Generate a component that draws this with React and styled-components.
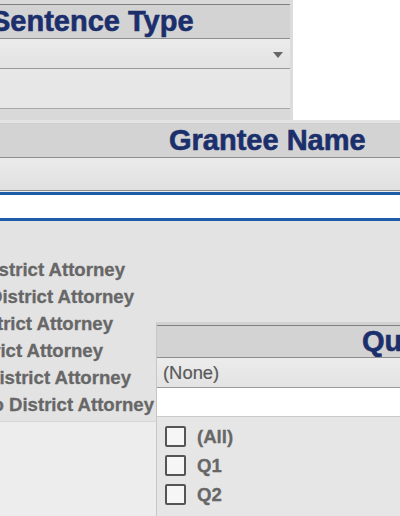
import React from "react";
import styled, { createGlobalStyle } from "styled-components";

const Global = createGlobalStyle`
  html, body { margin: 0; padding: 0; }
  body {
    width: 400px;
    height: 516px;
    overflow: hidden;
    background: #ededed;
    font-family: "Liberation Sans", Arial, sans-serif;
  }
`;

const Page = styled.div`
  position: relative;
  width: 400px;
  height: 516px;
  overflow: hidden;
  display: flex;
  flex-direction: column;
`;

const TopArea = styled.div`
  display: flex;
  height: 120px;
  flex-shrink: 0;
`;

const SentencePanel = styled.div`
  width: 293px;
  border-right: 3px solid #dcdcdc;
  background: #d9d9d9;
  display: flex;
  flex-direction: column;
  padding-top: 4px;
  box-sizing: border-box;
`;

const WhiteFill = styled.div`
  flex: 1;
  background: #ffffff;
`;

const Header = styled.div`
  height: ${(p) => p.$h || 33}px;
  flex-shrink: 0;
  background: #d3d3d3;
  border-top: ${(p) => (p.$topLine ? "1px solid #7f7f7f" : "none")};
  border-bottom: 1px solid #8e8e8e;
  display: flex;
  align-items: center;
  padding-left: ${(p) => p.$pad || 0}px;
  white-space: nowrap;
  overflow: hidden;
`;

const Title = styled.span`
  font-size: 29px;
  font-weight: 700;
  color: #1b2f6c;
  margin-left: ${(p) => p.$shift || 0}px;
  -webkit-text-stroke: 0.6px #1b2f6c;
`;

const DropRow = styled.div`
  height: 29px;
  flex-shrink: 0;
  background: linear-gradient(#ececec, #e2e2e2);
  border-bottom: 1px solid #9a9a9a;
  display: flex;
  align-items: center;
  justify-content: flex-end;
  padding-right: 7px;
`;

const Arrow = styled.div`
  width: 0;
  height: 0;
  border-left: 5px solid transparent;
  border-right: 5px solid transparent;
  border-top: 6px solid #666;
  margin-top: 2px;
`;

const EmptyRow = styled.div`
  height: 39px;
  flex-shrink: 0;
  background: #e7e7e7;
  border-bottom: 1px solid #a8a8a8;
`;

const Gap = styled.div`
  height: 3px;
  flex-shrink: 0;
  background: #e3e3e3;
  border-bottom: 1px solid #cfcfcf;
`;

const GranteePanel = styled.div`
  display: flex;
  flex-direction: column;
  flex-shrink: 0;
`;

const FilterRow = styled.div`
  height: 32px;
  flex-shrink: 0;
  background: linear-gradient(#ebebeb, #e0e0e0);
  border-bottom: 1px solid #8c8c8c;
`;

const SearchBox = styled.div`
  margin-top: 1px;
  height: 23px;
  background: #ffffff;
  border-top: 3px solid #1c5ca9;
  border-bottom: 3px solid #1c5ca9;
`;

const List = styled.div`
  height: 201px;
  flex-shrink: 0;
  background: #e3e3e3;
  padding-top: 35px;
  box-sizing: border-box;
  display: flex;
  flex-direction: column;
  border-bottom: 1px solid #d6d6d6;
`;

const ListItem = styled.div`
  height: 27px;
  line-height: 27px;
  width: ${(p) => p.$end}px;
  display: flex;
  justify-content: flex-end;
  font-size: 18.6px;
  font-weight: 700;
  color: #676767;
  white-space: nowrap;
  -webkit-text-stroke: 0.3px #676767;
`;

const QuarterPanel = styled.div`
  position: absolute;
  left: 156px;
  top: 322px;
  width: 260px;
  bottom: 0;
  border-left: 1px solid #c6c6c6;
  border-top: 3px solid #d2d2d2;
  background: #e6e6e6;
  display: flex;
  flex-direction: column;
`;

const NoneRow = styled.div`
  height: 29px;
  flex-shrink: 0;
  background: linear-gradient(#ececec, #e3e3e3);
  border-bottom: 1px solid #9a9a9a;
  display: flex;
  align-items: center;
  padding-left: 6px;
  font-size: 18.4px;
  color: #5a5a5a;
  -webkit-text-stroke: 0.2px #5a5a5a;
`;

const WhiteRow = styled.div`
  height: 28px;
  flex-shrink: 0;
  background: #ffffff;
  border-bottom: 1px solid #cacaca;
`;

const CheckList = styled.div`
  display: flex;
  flex-direction: column;
  padding-top: 9px;
  padding-left: 8px;
`;

const CheckRow = styled.div`
  height: 29px;
  display: flex;
  align-items: flex-start;
  gap: 11px;
`;

const Box = styled.div`
  width: 21px;
  height: 21px;
  box-sizing: border-box;
  border: 2px solid #555;
  border-radius: 2px;
  background: #f6f6f6;
`;

const CheckLabel = styled.span`
  font-size: 18.6px;
  font-weight: 700;
  color: #676767;
  line-height: 21px;
  -webkit-text-stroke: 0.3px #676767;
`;

const items = [
  { t: "strict Attorney", end: 125 },
  { t: "District Attorney", end: 134 },
  { t: "trict Attorney", end: 113 },
  { t: "rict Attorney", end: 103 },
  { t: "istrict Attorney", end: 131 },
  { t: "o District Attorney", end: 154 },
];

export default function App() {
  return (
    <>
      <Global />
      <Page>
        <TopArea>
          <SentencePanel>
            <Header $h={33} $topLine>
              <Title $shift={-9}>Sentence Type</Title>
            </Header>
            <DropRow>
              <Arrow />
            </DropRow>
            <EmptyRow />
          </SentencePanel>
          <WhiteFill />
        </TopArea>
        <Gap />
        <GranteePanel>
          <Header $h={33} $pad={169}>
            <Title>Grantee Name</Title>
          </Header>
          <FilterRow />
          <SearchBox />
        </GranteePanel>
        <List>
          {items.map((it) => (
            <ListItem key={it.t} $end={it.end}>
              <span>{it.t}</span>
            </ListItem>
          ))}
        </List>
        <QuarterPanel>
          <Header $h={31} $topLine $pad={205}>
            <Title>Quarter</Title>
          </Header>
          <NoneRow>(None)</NoneRow>
          <WhiteRow />
          <CheckList>
            {["(All)", "Q1", "Q2"].map((q) => (
              <CheckRow key={q}>
                <Box />
                <CheckLabel>{q}</CheckLabel>
              </CheckRow>
            ))}
          </CheckList>
        </QuarterPanel>
      </Page>
    </>
  );
}
